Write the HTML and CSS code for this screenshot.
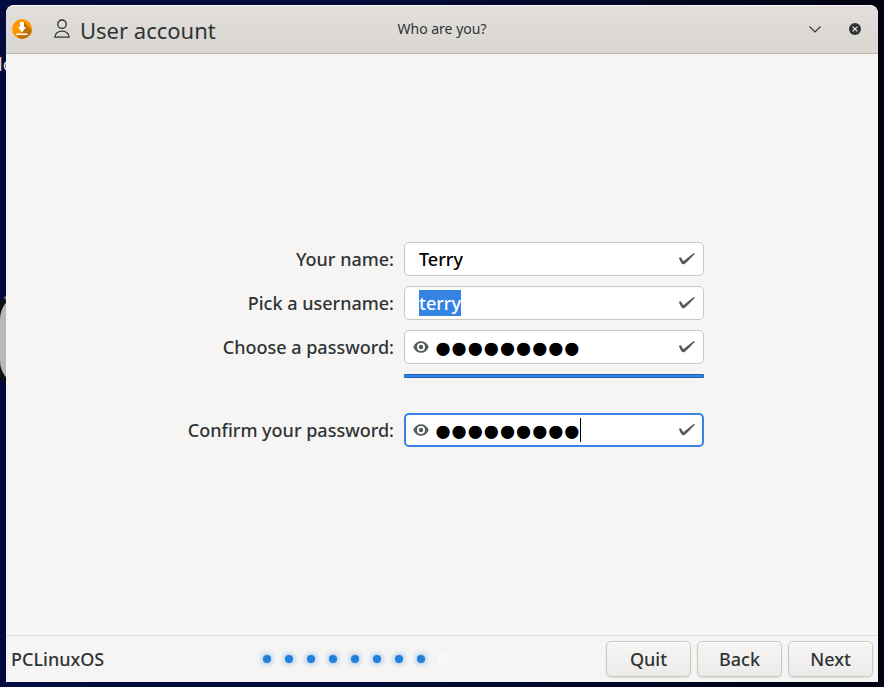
FILE: index.html
```html
<!DOCTYPE html>
<html lang="en">
<head>
<meta charset="UTF-8">
<meta name="viewport" content="width=device-width, initial-scale=1.0">
<title>User account</title>
<link rel="stylesheet" href="styles.css">
</head>
<body>

<svg width="0" height="0" class="defs" aria-hidden="true">
  <symbol id="check" viewBox="0 0 16 16">
    <path d="M0 7C0.8 5.8 2.2 6.2 2.8 7.8L4.4 10.2C7.2 8.4 10.4 5 15 2L16 2.8C12.4 6.2 9.4 9.8 6.2 12.6C5.2 13.5 3.8 13.6 3 12.7C1.6 11 0.6 9.2 0 7Z" fill="#555a5b"/>
  </symbol>
  <symbol id="eye" viewBox="0 0 16 16">
    <path d="M0.3 8C3.2 0.2 12.8 0.2 15.7 8C12.8 15.8 3.2 15.8 0.3 8Z" fill="#555a5b"/>
    <circle cx="8" cy="8" r="4" fill="#fff"/>
    <circle cx="8" cy="8" r="2.2" fill="#555a5b"/>
  </symbol>
</svg>

<span class="desktop-label">lo</span>
<div class="desktop-emblem"></div>

<div class="window">
  <header class="titlebar">
    <div class="heading">
      <svg class="app-icon" viewBox="0 0 20 20">
        <defs><clipPath id="disc"><circle cx="10" cy="10" r="10"/></clipPath></defs>
        <circle cx="10" cy="10" r="10" fill="#ff9800"/>
        <path d="M12 3L24 15V24H9L5 16L9 14Z" fill="#bd7307" clip-path="url(#disc)"/>
        <path d="M8 3H12V8H14L10 13.5L6 8H8Z" fill="#fff"/>
        <path d="M4.5 14.5H15.5V16H4.5Z" fill="#fff"/>
      </svg>
      <svg class="user-icon" viewBox="0 0 16 20">
        <circle cx="8" cy="5.2" r="4.2"/>
        <path d="M0.8 18.2C0.8 10.2 15.2 10.2 15.2 18.2Z"/>
      </svg>
      <h1>User account</h1>
    </div>
    <p class="subtitle">Who are you?</p>
    <div class="window-controls">
      <button type="button" aria-label="Minimize">
        <svg width="12" height="12" viewBox="0 0 12 12"><path d="M0.5 3.5L6 9L11.5 3.5" fill="none" stroke="#2e3436" stroke-width="1.1"/></svg>
      </button>
      <button type="button" aria-label="Close">
        <svg width="12" height="12" viewBox="0 0 12 12"><circle cx="6" cy="6" r="6" fill="#2e3436"/><path d="M3.6 3.6L8.4 8.4M8.4 3.6L3.6 8.4" stroke="#e4e1de" stroke-width="1.3"/></svg>
      </button>
    </div>
  </header>

  <main>
    <form class="account-form" id="account-form">
      <label for="full-name">Your name:</label>
      <div class="field">
        <input type="text" id="full-name" value="Terry">
        <svg class="icon"><use href="#check"/></svg>
      </div>

      <label for="username">Pick a username:</label>
      <div class="field">
        <input type="text" id="username" class="selected" value="terry">
        <svg class="icon"><use href="#check"/></svg>
      </div>

      <label for="password">Choose a password:</label>
      <div class="field secret">
        <svg class="icon"><use href="#eye"/></svg>
        <input type="password" id="password" value="123456789">
        <svg class="icon"><use href="#check"/></svg>
      </div>

      <div class="strength"></div>

      <label for="confirm">Confirm your password:</label>
      <div class="field secret active">
        <svg class="icon"><use href="#eye"/></svg>
        <input type="password" id="confirm" value="123456789">
        <span class="caret"></span>
        <svg class="icon"><use href="#check"/></svg>
      </div>
    </form>
  </main>

  <footer>
    <span>PCLinuxOS</span>
    <div class="steps">
      <i></i><i></i><i></i><i></i><i></i><i></i><i></i><i></i><i class="todo"></i>
    </div>
    <div class="actions">
      <button type="button">Quit</button>
      <button type="button">Back</button>
      <button type="submit" form="account-form">Next</button>
    </div>
  </footer>
</div>

</body>
</html>
```
FILE: styles.css
```css
* {
  box-sizing: border-box;
}
body {
  display: flex;
  min-height: 100vh;
  margin: 0;
  padding: 5px 6px;
  background: linear-gradient(90deg, #020a40, #020a35 50%, #00020f);
  color: #2e3436;
  font-family: "Noto Sans", sans-serif;
  font-size: 18px;
  font-weight: 500;
  font-variant-ligatures: none;
  line-height: 24px;
  overflow: hidden;
}
.defs {
  position: absolute;
}
.desktop-label {
  position: absolute;
  left: -2px;
  top: 52px;
  color: #ddd;
  font-weight: 400;
}
.desktop-emblem {
  position: absolute;
  left: -5px;
  top: 289px;
  width: 60px;
  height: 102px;
  border: 5px solid #111;
  border-top-color: #888;
  border-radius: 30px;
  background: #b8b8b8;
}
.window {
  position: relative;
  display: flex;
  flex-direction: column;
  flex: 1;
  background: #f6f5f3;
  border-radius: 8px 8px 0 0;
  overflow: hidden;
}
.titlebar {
  display: grid;
  grid-template-columns: 1fr auto 1fr;
  align-items: center;
  height: 49px;
  padding: 0 6px 2px;
  background: linear-gradient(#e1dedb, #dad6d2);
  border-top: 1px solid #f8f7f7;
  border-bottom: 1px solid #bab5ae;
  border-radius: 8px 8px 0 0;
}
.heading {
  display: flex;
  align-items: center;
}
.app-icon {
  width: 20px;
  height: 20px;
}
.user-icon {
  width: 16px;
  height: 20px;
  margin: 0 10px 0 22px;
  fill: none;
  stroke: #2e3436;
  stroke-width: 1.3;
}
h1 {
  margin: 0;
  padding-top: 2px;
  font-size: 22px;
  font-weight: 400;
}
.subtitle {
  margin: 0;
  font-size: 14px;
  font-weight: 400;
}
.window-controls {
  display: flex;
  justify-content: flex-end;
  gap: 26px;
  padding-right: 10px;
}
.window-controls button {
  display: flex;
  padding: 1px;
  border: none;
  background: none;
}
main {
  display: flex;
  flex: 1;
  align-items: center;
  justify-content: center;
}
.account-form {
  display: grid;
  grid-template-columns: minmax(214px, auto) 300px;
  gap: 10px;
  align-items: center;
}
.account-form label {
  text-align: right;
}
.field {
  display: flex;
  align-items: center;
  height: 34px;
  padding: 0 8px 0 14px;
  border: 1px solid #cdc7c2;
  border-radius: 5px;
  background: #fff;
}
.field.secret {
  padding-left: 8px;
}
.field.active {
  padding: 0 7px;
  border: 2px solid #3584e4;
}
.field input {
  field-sizing: content;
  height: 26px;
  padding: 0;
  border: none;
  outline: none;
  background: none;
  color: #000;
  font: inherit;
}
.field input.selected {
  background: #3584e4;
  color: #fff;
}
.field.secret input {
  height: 30px;
  margin-left: 6px;
  padding-top: 4px;
  font-family: "Liberation Sans", sans-serif;
  font-size: 46px;
  font-weight: 700;
  line-height: 26px;
}
.icon {
  flex: none;
  width: 16px;
  height: 16px;
}
.icon:last-child {
  margin-left: auto;
}
.caret {
  width: 1px;
  height: 24px;
  background: #000;
}
.strength {
  grid-column: 2;
  height: 4px;
  margin-bottom: 25px;
  border: 1px solid #185fb4;
  border-radius: 1px;
  background: #3584e4;
}
footer {
  display: flex;
  align-items: center;
  justify-content: space-between;
  padding: 5px;
  border-top: 1px solid #dcdbd9;
}
.steps {
  display: flex;
  gap: 14px;
}
.steps i {
  width: 8px;
  height: 8px;
  border-radius: 50%;
  background: #2180dc;
  box-shadow: 0 0 6px #5a9fe6;
}
.steps .todo {
  background: #f5f8fb;
  box-shadow: 0 0 2px 1px #fff;
}
.actions {
  display: flex;
  gap: 6px;
}
.actions button {
  width: 85px;
  height: 36px;
  padding: 0;
  border: 1px solid #cdc7c2;
  border-radius: 5px;
  background: linear-gradient(#f6f5f4, #edebe9);
  box-shadow: inset 0 1px #fff, 0 1px 2px #0000001a;
  color: inherit;
  font: inherit;
}
```
